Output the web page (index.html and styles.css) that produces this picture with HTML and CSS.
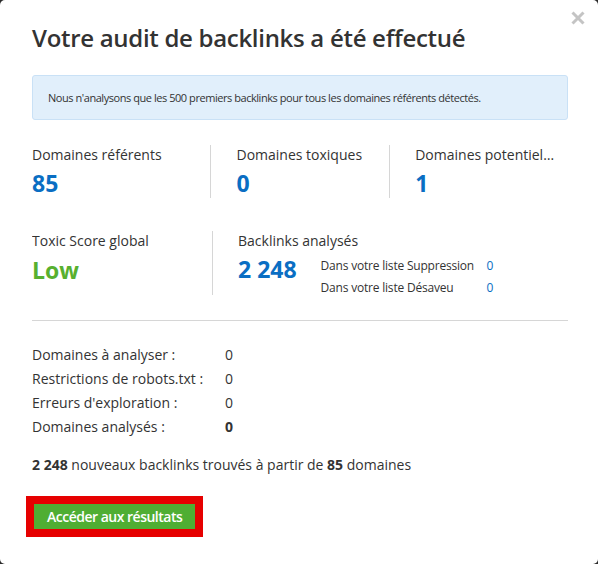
FILE: index.html
```html
<!doctype html>
<html lang="fr">
<head>
  <meta charset="utf-8">
  <title>Audit de backlinks</title>
<link rel="stylesheet" href="styles.css">
</head>

<body>

<div id="modal">

  <a class="close" href="#">
    <svg width="14" height="14" viewBox="0 0 14 14"><path d="M1.5 1.5 L12.5 12.5 M12.5 1.5 L1.5 12.5" stroke="#c4c4c4" stroke-width="3" fill="none"/></svg>
  </a>

  <h1>Votre audit de backlinks a été effectué</h1>

  <div class="notice">Nous n'analysons que les 500 premiers backlinks pour tous les domaines référents détectés.</div>

  <div class="stats">
    <div class="stat">
      <div class="label">Domaines référents</div>
      <div class="value">85</div>
    </div>
    <div class="stat">
      <div class="label">Domaines toxiques</div>
      <div class="value">0</div>
    </div>
    <div class="stat">
      <div class="label">Domaines potentiellement toxiques</div>
      <div class="value">1</div>
    </div>
  </div>

  <div class="stats second">
    <div class="stat">
      <div class="label">Toxic Score global</div>
      <div class="value low">Low</div>
    </div>
    <div class="stat wide">
      <div class="label">Backlinks analysés</div>
      <div class="backlinks">
        <div class="value">2 248</div>
        <div class="sublist">
          <div><span>Dans votre liste Suppression</span><a href="#">0</a></div>
          <div><span>Dans votre liste Désaveu</span><a href="#">0</a></div>
        </div>
      </div>
    </div>
  </div>

  <hr>

  <div class="details">
    <div><span>Domaines à analyser :</span>0</div>
    <div><span>Restrictions de robots.txt :</span>0</div>
    <div><span>Erreurs d'exploration :</span>0</div>
    <div><span>Domaines analysés :</span><b>0</b></div>
  </div>

  <p class="summary"><b>2 248</b> nouveaux backlinks trouvés à partir de <b>85</b> domaines</p>

  <div class="highlight">
    <a class="button" href="#">Accéder aux résultats</a>
  </div>

</div>

</body>
</html>
```

FILE: styles.css
```css
html {
  box-sizing: border-box;
}
*, *:before, *:after {
  box-sizing: inherit;
}

body {
  margin: 0;
  padding: 0;
  background-color: #2b2b2b;
  font-family: 'Open Sans', sans-serif;
  color: #333;
}

#modal {
  position: relative;
  width: 598px;
  height: 564px;
  padding: 23px 30px 0 32px;
  background-color: #fff;
  border-radius: 5px;
}

.close {
  position: absolute;
  top: 11px;
  right: 13px;
  line-height: 0;
}

h1 {
  font-size: 24px;
  font-weight: 600;
  line-height: 30px;
  margin: 0 0 22px;
  letter-spacing: -0.3px;
}

.notice {
  height: 45px;
  display: flex;
  align-items: center;
  padding: 0 15px;
  font-size: 11px;
  letter-spacing: -0.45px;
  white-space: nowrap;
  background-color: #e1effb;
  border: 1px solid #c9e1f6;
  border-radius: 3px;
  margin-bottom: 25px;
}

.stats {
  display: flex;
}

.stats.second {
  margin-top: 33px;
}

.stat {
  width: 180px;
  min-width: 0;
  padding-left: 25px;
  border-left: 1px solid #d6d6d6;
}

.stat:first-child {
  padding-left: 0;
  border-left: none;
}

.stat:last-child {
  padding-right: 12px;
}

.stat.wide {
  width: auto;
  flex: 1;
  height: 64px;
}

.label {
  font-size: 14px;
  line-height: 20px;
  white-space: nowrap;
  overflow: hidden;
  text-overflow: ellipsis;
}

.value {
  font-size: 23px;
  font-weight: 700;
  line-height: 30px;
  margin-top: 3px;
  color: #0a6ec3;
}

.value.low {
  color: #57b02f;
  margin-top: 4px;
}

.backlinks {
  display: flex;
  align-items: flex-start;
}

.sublist {
  margin-left: 24px;
  margin-top: 4px;
  font-size: 12px;
  letter-spacing: -0.2px;
}

.sublist div {
  display: flex;
  line-height: 22px;
}

.sublist span {
  width: 166px;
}

.sublist a {
  color: #0a6ec3;
  text-decoration: none;
}

hr {
  border: none;
  border-top: 1px solid #d6d6d6;
  margin: 25px 0 22px;
}

.details {
  font-size: 14px;
}

.details div {
  display: flex;
  line-height: 24px;
}

.details span {
  width: 193px;
}

.summary {
  font-size: 14px;
  line-height: 24px;
  margin: 14px 0 19px;
}

.highlight {
  display: inline-block;
  border: 8px solid #e60000;
  margin-left: -6px;
}

.button {
  display: block;
  padding: 0 13px;
  height: 25px;
  line-height: 25px;
  font-size: 14px;
  font-weight: 600;
  letter-spacing: -0.5px;
  color: #fff;
  text-decoration: none;
  background-color: #4fae33;
}
```
